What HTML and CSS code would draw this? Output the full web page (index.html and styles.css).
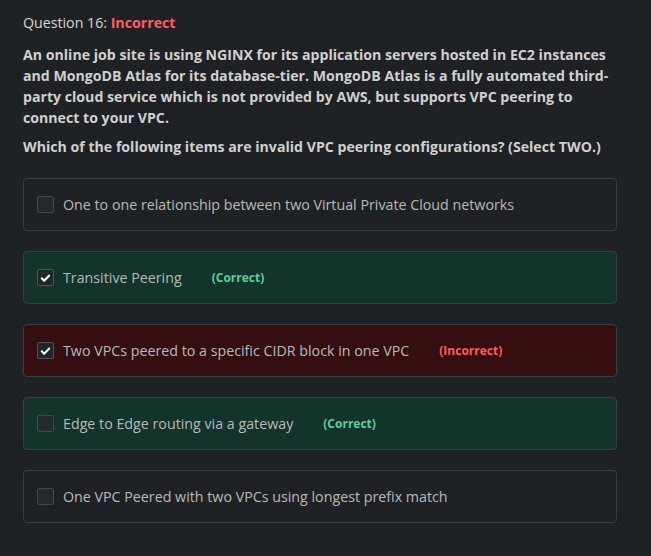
FILE: index.html
```html
<!DOCTYPE html>
<html>
<head>
<meta charset="utf-8">
<link rel="stylesheet" href="styles.css">
</head>
<body>
<div class="quiz">
  <div class="q-title">Question 16: <span class="bad">Incorrect</span></div>
  <p class="q-text">An online job site is using NGINX for its application servers hosted in EC2 instances and MongoDB Atlas for its database-tier. MongoDB Atlas is a fully automated third-party cloud service which is not provided by AWS, but supports VPC peering to connect to your VPC.</p>
  <p class="q-text q-ask">Which of the following items are invalid VPC peering configurations? (Select TWO.)</p>
  <div class="options">
    <div class="opt">
      <span class="box"></span>
      <span class="label">One to one relationship between two Virtual Private Cloud networks</span>
    </div>
    <div class="opt opt-good">
      <span class="box checked"><svg viewBox="0 0 16 16" width="16" height="16"><path d="M4 8.3l2.6 2.6L12 5.4" fill="none" stroke="#fff" stroke-width="2.2" stroke-linecap="round" stroke-linejoin="round"/></svg></span>
      <span class="label">Transitive Peering</span>
      <span class="tag tag-good">(Correct)</span>
    </div>
    <div class="opt opt-bad">
      <span class="box checked"><svg viewBox="0 0 16 16" width="16" height="16"><path d="M4 8.3l2.6 2.6L12 5.4" fill="none" stroke="#fff" stroke-width="2.2" stroke-linecap="round" stroke-linejoin="round"/></svg></span>
      <span class="label">Two VPCs peered to a specific CIDR block in one VPC</span>
      <span class="tag tag-bad">(Incorrect)</span>
    </div>
    <div class="opt opt-good">
      <span class="box"></span>
      <span class="label">Edge to Edge routing via a gateway</span>
      <span class="tag tag-good">(Correct)</span>
    </div>
    <div class="opt">
      <span class="box"></span>
      <span class="label">One VPC Peered with two VPCs using longest prefix match</span>
    </div>
  </div>
</div>
</body>
</html>
```
FILE: styles.css
```css
html, body {
  margin: 0;
  background: #1f2224;
}
body {
  font-family: "Open Sans", "Noto Sans", sans-serif;
  color: #d2d2d2;
  font-size: 14px;
}
.quiz {
  width: 594px;
  padding: 13px 0 0 23px;
}
.q-title {
  font-size: 14.2px;
  line-height: 20px;
  color: #d6d6d6;
}
.bad {
  color: #ff5c60;
  font-weight: 700;
}
.q-text {
  margin: 11px 0 0 0;
  font-weight: 700;
  font-size: 14.15px;
  line-height: 21px;
  color: #d0d0d0;
}
.q-ask {
  margin-top: 8px;
}
.options {
  display: flex;
  flex-direction: column;
  gap: 20px;
  margin-top: 21px;
}
.opt {
  display: flex;
  align-items: center;
  height: 53px;
  box-sizing: border-box;
  border: 1px solid #3b3e41;
  border-radius: 4px;
  padding-left: 13px;
}
.opt-good {
  background: #12342a;
}
.opt-bad {
  background: #350e10;
}
.box {
  width: 17px;
  height: 17px;
  box-sizing: border-box;
  border: 1px solid #45494d;
  border-radius: 2px;
  background: #26292c;
  display: inline-flex;
  align-items: center;
  justify-content: center;
  margin-right: 9px;
  flex: none;
}
.box.checked {
  background: #222528;
  border-color: #505458;
}
.box svg {
  display: block;
}
.label {
  font-size: 14.25px;
  color: #b9b9b9;
}
.tag {
  font-weight: 700;
  font-size: 12px;
  margin-left: 30px;
}
.tag-good {
  color: #5ccf96;
}
.tag-bad {
  color: #ff5c60;
}
```
